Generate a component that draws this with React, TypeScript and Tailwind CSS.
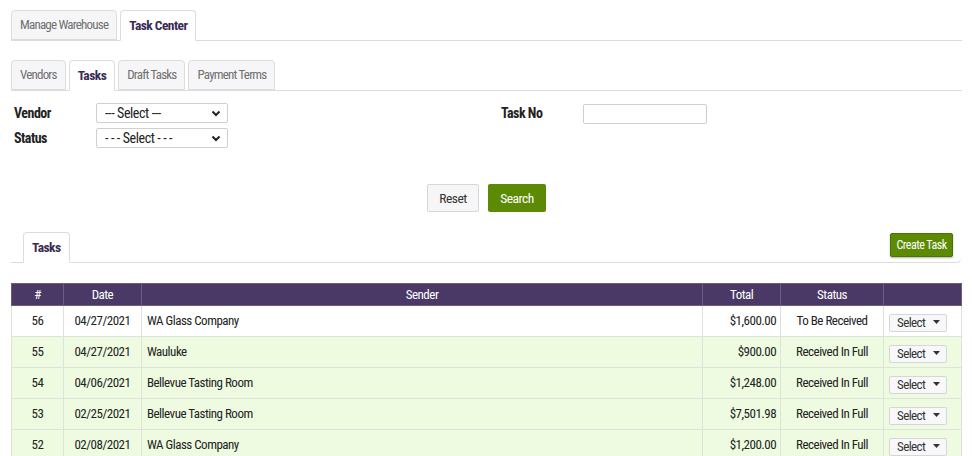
import React from "react";

const font = { fontFamily: '"Roboto Condensed", "DejaVu Sans Condensed", "Liberation Sans", sans-serif' };

const rows = [
  { id: "56", date: "04/27/2021", sender: "WA Glass Company", total: "$1,600.00", status: "To Be Received", green: false },
  { id: "55", date: "04/27/2021", sender: "Wauluke", total: "$900.00", status: "Received In Full", green: true },
  { id: "54", date: "04/06/2021", sender: "Bellevue Tasting Room", total: "$1,248.00", status: "Received In Full", green: true },
  { id: "53", date: "02/25/2021", sender: "Bellevue Tasting Room", total: "$7,501.98", status: "Received In Full", green: true },
  { id: "52", date: "02/08/2021", sender: "WA Glass Company", total: "$1,200.00", status: "Received In Full", green: true },
];

function Tab({ label, active }: { label: string; active?: boolean }) {
  return active ? (
    <div className="h-[31px] -mb-px px-[8px] flex items-center border border-[#dcdcdc] border-b-white bg-white rounded-t-[4px] text-[13.5px] tracking-[-0.55px] font-bold text-[#3a2b55]">
      {label}
    </div>
  ) : (
    <div className="h-[30px] px-[8px] flex items-center border border-[#dcdcdc] bg-[#f6f6f8] rounded-t-[4px] text-[13px] tracking-[-0.8px] text-[#707070]">
      {label}
    </div>
  );
}

function Chevron() {
  return (
    <svg width="10" height="7" viewBox="0 0 10 7" className="text-[#222]">
      <path d="M1.5 1.5 L5 5 L8.5 1.5" stroke="currentColor" strokeWidth="2" fill="none" />
    </svg>
  );
}

function FakeSelect({ text }: { text: string }) {
  return (
    <div className="w-[132px] h-[20px] border border-[#cfcfcf] rounded-[2px] bg-white flex items-center justify-between pl-[8px] pr-[6px] text-[14px] tracking-[-0.4px] text-[#222]">
      <span>{text}</span>
      <Chevron />
    </div>
  );
}

export default function App() {
  return (
    <div style={font} className="w-[972px] h-[456px] overflow-hidden bg-white pl-[11px] pr-[10px] pt-[10px] text-[#222] tracking-[-0.5px]">
      {/* top tabs */}
      <div className="flex gap-[3px] items-end border-b border-[#dcdcdc]">
        <Tab label="Manage Warehouse" />
        <Tab label="Task Center" active />
      </div>

      {/* sub tabs */}
      <div className="mt-[19px] flex gap-[3px] items-end border-b border-[#dcdcdc]">
        <Tab label="Vendors" />
        <Tab label="Tasks" active />
        <Tab label="Draft Tasks" />
        <Tab label="Payment Terms" />
      </div>

      {/* filters */}
      <div className="mt-[12px] flex">
        <div className="w-[490px] flex flex-col gap-[5px]">
          <div className="flex items-center h-[20px]">
            <div className="w-[85px] pl-[3px] leading-[20px] text-[14px] font-bold text-[#222]">Vendor</div>
            <FakeSelect text="--- Select ---" />
          </div>
          <div className="flex items-center h-[20px]">
            <div className="w-[85px] pl-[3px] leading-[20px] text-[14px] font-bold text-[#222]">Status</div>
            <FakeSelect text="- - - Select - - -" />
          </div>
        </div>
        <div className="flex items-start">
          <div className="w-[82px] h-[20px] leading-[20px] text-[14px] font-bold text-[#222]">Task No</div>
          <div className="w-[124px] h-[20px] mt-px border border-[#cfcfcf] rounded-[2px] bg-white" />
        </div>
      </div>

      {/* buttons */}
      <div className="mt-[36px] flex justify-center gap-[9px]">
        <div className="w-[52px] h-[28px] border border-[#d6d6d6] bg-[#f6f6f8] rounded-[2px] flex items-center justify-center text-[13.5px] text-[#333]">
          Reset
        </div>
        <div className="w-[58px] h-[28px] bg-[#5c8a04] rounded-[2px] flex items-center justify-center text-[13.5px] text-white">
          Search
        </div>
      </div>

      {/* tasks tab */}
      <div className="mt-[20px] flex items-end justify-between border-b border-[#dcdcdc] rounded-br-[6px] pl-[12px] pr-[9px]">
        <Tab label="Tasks" active />
        <div className="mb-[5px] w-[63px] h-[24px] bg-[#5c8a04] border border-[#4c7400] rounded-[2px] shadow-[0_1px_2px_rgba(0,0,0,0.3)] flex items-center justify-center text-[12px] text-white">
          Create Task
        </div>
      </div>

      {/* table */}
      <table className="mt-[20px] w-[951px] border-collapse text-[13px]">
        <colgroup>
          <col className="w-[52px]" />
          <col className="w-[78px]" />
          <col className="w-[562px]" />
          <col className="w-[78px]" />
          <col className="w-[103px]" />
          <col className="w-[78px]" />
        </colgroup>
        <thead>
          <tr className="h-[22px] bg-[#4a3966] text-white">
            <th className="font-normal border border-[#6b5d82] text-center">#</th>
            <th className="font-normal border border-[#6b5d82] text-center">Date</th>
            <th className="font-normal border border-[#6b5d82] text-center">Sender</th>
            <th className="font-normal border border-[#6b5d82] text-center">Total</th>
            <th className="font-normal border border-[#6b5d82] text-center">Status</th>
            <th className="font-normal border border-[#6b5d82]"></th>
          </tr>
        </thead>
        <tbody>
          {rows.map((r) => (
            <tr key={r.id} className={`h-[31px] ${r.green ? "bg-[#eefbe0]" : "bg-white"} text-[#222]`}>
              <td className="border border-[#dde3d8] text-center">{r.id}</td>
              <td className="border border-[#dde3d8] text-center">{r.date}</td>
              <td className="border border-[#dde3d8] pl-[5px]">{r.sender}</td>
              <td className="border border-[#dde3d8] text-right pr-[4px]">{r.total}</td>
              <td className="border border-[#dde3d8] text-center">{r.status}</td>
              <td className="border border-[#dde3d8] pl-[5px]">
                <div className="w-[58px] h-[18px] mt-[3px] border border-[#d6d6d6] bg-[#f8f8fa] rounded-[2px] flex items-center pl-[7px] gap-[8px] text-[13px] tracking-[-0.6px] text-[#333]">
                  <span>Select</span>
                  <svg width="7" height="5" viewBox="0 0 7 5"><path d="M0 0 H7 L3.5 4 Z" fill="#333" /></svg>
                </div>
              </td>
            </tr>
          ))}
        </tbody>
      </table>
    </div>
  );
}
